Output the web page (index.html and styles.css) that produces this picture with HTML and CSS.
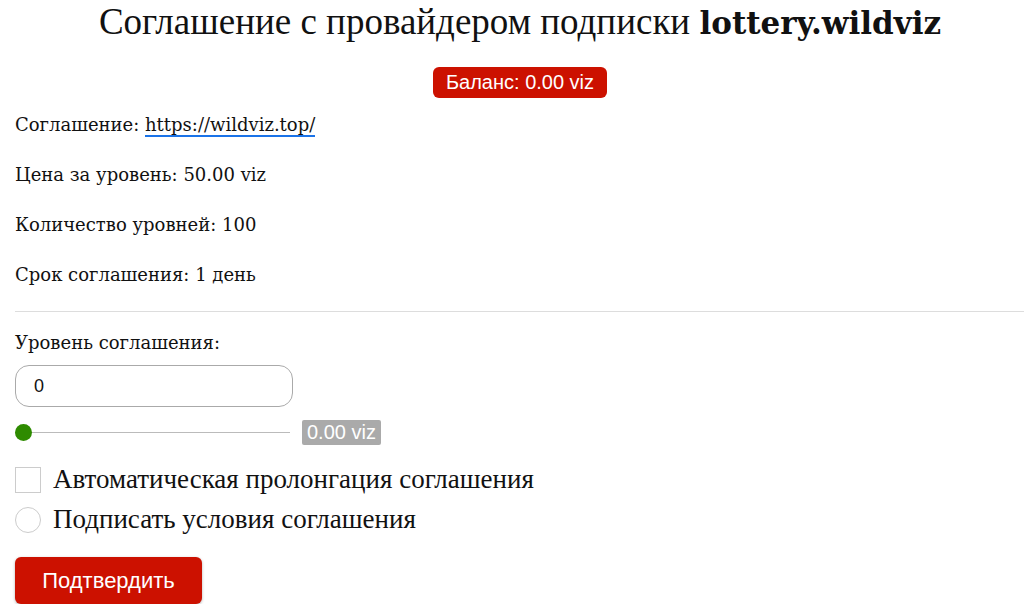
FILE: index.html
```html
<!DOCTYPE html>
<html lang="ru">
<head>
<meta charset="utf-8">
<title>Соглашение</title>
<link rel="stylesheet" href="styles.css">
</head>
<body>
<h1 class="title">Соглашение с провайдером подписки <b class="name">lottery.wildviz</b></h1>
<div class="balance-row"><span class="balance">Баланс: 0.00 viz</span></div>
<p class="info first">Соглашение: <a href="#" class="link">https://wildviz.top/</a></p>
<p class="info">Цена за уровень: 50.00 viz</p>
<p class="info">Количество уровней: 100</p>
<p class="info">Срок соглашения: 1 день</p>
<hr class="sep">
<p class="label">Уровень соглашения:</p>
<div class="input-box">0</div>
<div class="range-row">
  <div class="range"><span class="thumb"></span></div>
  <span class="amount">0.00 viz</span>
</div>
<div class="check-row"><span class="box"></span><span class="check-text">Автоматическая пролонгация соглашения</span></div>
<div class="check-row"><span class="box round"></span><span class="check-text">Подписать условия соглашения</span></div>
<button class="confirm">Подтвердить</button>
</body>
</html>
```
FILE: styles.css
```css
html, body { margin: 0; padding: 0; background: #fff; }
body {
  padding: 0 0 0 15px;
  width: 1010px;
  font-family: "DejaVu Serif", "Liberation Serif", serif;
  color: #111;
  overflow: hidden;
}
.title {
  font-family: "Liberation Serif", serif;
  font-weight: normal;
  font-size: 37px;
  text-align: center;
  white-space: nowrap;
  margin: 0;
  padding-top: 2px;
  line-height: 40px;
}
.title .name { font-family: "DejaVu Serif", serif; font-weight: bold; font-size: 31px; }
.balance-row { text-align: center; margin: 24px 0 0 0; height: 31px; }
.balance {
  display: inline-block;
  background: #cc1100;
  color: #fff;
  font-family: "Liberation Sans", Arial, sans-serif;
  font-size: 20px;
  line-height: 31px;
  height: 31px;
  padding: 0 13px;
  border-radius: 6px;
}
.info {
  font-family: "DejaVu Serif", serif;
  font-size: 18px;
  margin: 0;
  line-height: 26px;
  margin-top: 24px;
}
.info.first { margin-top: 14px; }
.link { color: #111; text-decoration: none; border-bottom: 2px solid #1a73e8; }
.sep { border: 0; border-top: 1px solid #ddd; margin: 23px 0 0 0; }
.label { font-family: "DejaVu Serif", serif; font-size: 18px; margin: 18px 0 0 0; line-height: 26px; }
.input-box {
  height: 40px;
  border: 1px solid #aaa;
  border-radius: 14px;
  font-family: "Liberation Sans", Arial, sans-serif;
  font-size: 18px;
  line-height: 40px;
  padding-left: 18px;
  margin-top: 9px;
  width: 258px;
}
.range-row { display: flex; align-items: center; margin-top: 13px; gap: 12px; height: 25px; }
.range { position: relative; width: 275px; height: 1px; background: #bbb; }
.thumb {
  position: absolute;
  left: 0;
  top: -8px;
  width: 17px;
  height: 17px;
  border-radius: 50%;
  background: #2e8b00;
}
.amount {
  background: #aaa;
  color: #fff;
  font-family: "Liberation Sans", Arial, sans-serif;
  font-size: 20px;
  line-height: 25px;
  padding: 0 5px;
  border-radius: 2px;
}
.check-row { display: flex; align-items: center; gap: 12px; margin-top: 21px; height: 27px; }
.check-row + .check-row { margin-top: 13px; }
.box { width: 24px; height: 24px; border: 1px solid #ccc; flex: none; }
.box.round { border-radius: 50%; }
.check-text { font-family: "Liberation Serif", serif; font-size: 27px; }
.confirm {
  display: block;
  margin-top: 24px;
  width: 187px;
  height: 47px;
  border: 0;
  border-radius: 6px;
  background: #cc1100;
  color: #fff;
  font-family: "Liberation Sans", Arial, sans-serif;
  font-size: 22px;
  box-shadow: 0 1px 3px rgba(0,0,0,0.3);
}
```
